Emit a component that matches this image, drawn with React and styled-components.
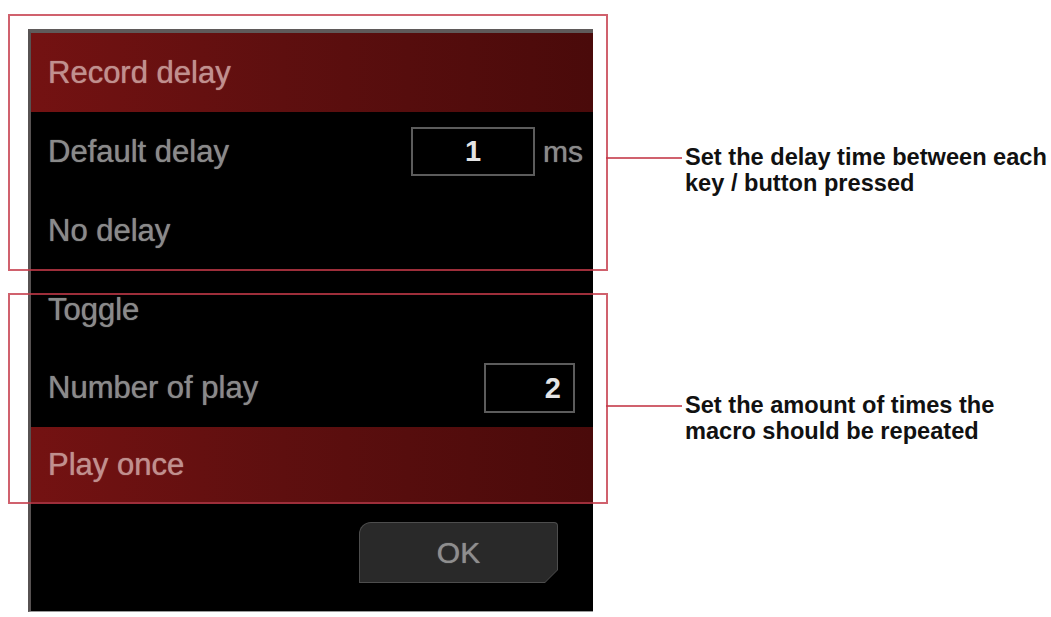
import React from 'react';
import styled, { createGlobalStyle } from 'styled-components';

const GlobalStyle = createGlobalStyle`
  html, body {
    margin: 0;
    padding: 0;
    background: #ffffff;
  }
  body {
    font-family: "Liberation Sans", Arial, sans-serif;
  }
`;

const Page = styled.div`
  padding: 29px 0 0 28px;
  width: 1051px;
  height: 617px;
  box-sizing: border-box;
  overflow: hidden;
`;

const Stage = styled.div`
  position: relative;
  width: 565px;
`;

const Panel = styled.div`
  box-sizing: border-box;
  width: 565px;
  height: 583px;
  background: #000;
  border-top: 4px solid #5f5a5a;
  border-left: 3px solid #575252;
  border-bottom: 1px solid #9a9a9a;
  display: flex;
  flex-direction: column;
`;

const Row = styled.div`
  height: ${p => p.h}px;
  flex: none;
  display: flex;
  align-items: center;
  padding: 0 ${p => p.pr || 10}px 0 17px;
  background: ${p => p.active
    ? 'linear-gradient(90deg, #741212 0%, #5e0f0f 45%, #4a0a0a 100%)'
    : 'transparent'};
`;

const Label = styled.span`
  flex: 1;
  font-size: 31px;
  color: ${p => p.active ? '#c0908e' : '#8a8a8a'};
  text-shadow: 0 0 1px currentColor;
  white-space: nowrap;
`;

const Field = styled.div`
  box-sizing: border-box;
  width: ${p => p.w}px;
  height: ${p => p.hgt}px;
  border: 2px solid #5c5c5c;
  display: flex;
  align-items: center;
  justify-content: ${p => p.align === 'right' ? 'flex-end' : 'center'};
  padding: 0 ${p => p.align === 'right' ? 12 : 0}px 0 0;
  color: #e4e4e4;
  font-size: 29px;
  font-weight: bold;
`;

const Unit = styled.span`
  margin-left: 8px;
  font-size: 30px;
  color: #8a8a8a;
  text-shadow: 0 0 1px currentColor;
`;

const Footer = styled.div`
  display: flex;
  justify-content: flex-end;
  padding: 20px 35px 0 0;
`;

const OkButton = styled.button`
  width: 199px;
  height: 61px;
  padding: 1px;
  border: none;
  background: #4d4d4d;
  border-radius: 12px 4px 0 0;
  clip-path: polygon(0 0, 100% 0, 100% calc(100% - 13px), calc(100% - 13px) 100%, 0 100%);
  cursor: pointer;
`;

const OkFace = styled.span`
  display: flex;
  align-items: center;
  justify-content: center;
  width: 100%;
  height: 100%;
  background: #292929;
  border-radius: 11px 3px 0 0;
  clip-path: polygon(0 0, 100% 0, 100% calc(100% - 12px), calc(100% - 12px) 100%, 0 100%);
  color: #8e8e8e;
  font-family: "Liberation Sans", Arial, sans-serif;
  font-size: 30px;
  text-shadow: 0 0 1px currentColor;
`;

const Frame = styled.div`
  position: absolute;
  left: -20px;
  top: ${p => p.top}px;
  width: 600px;
  height: ${p => p.h}px;
  box-sizing: border-box;
  border: 2px solid rgba(196, 58, 72, 0.8);
  pointer-events: none;
`;

const Callout = styled.div`
  position: absolute;
  left: 100%;
  top: ${p => p.top}px;
  display: flex;
  align-items: flex-start;
`;

const Connector = styled.div`
  width: 76px;
  height: 2px;
  margin-top: 13px;
  background: rgba(196, 58, 72, 0.8);
`;

const Note = styled.p`
  margin: 0 0 0 3px;
  font-size: 23.6px;
  line-height: 26px;
  font-weight: bold;
  color: #111;
  white-space: nowrap;
`;

export default function App() {
  return (
    <Page>
      <GlobalStyle />
      <Stage>
        <Panel>
          <Row h={79} active>
            <Label active>Record delay</Label>
          </Row>
          <Row h={79}>
            <Label>Default delay</Label>
            <Field w={124} hgt={49}>1</Field>
            <Unit>ms</Unit>
          </Row>
          <Row h={79}>
            <Label>No delay</Label>
          </Row>
          <Row h={79}>
            <Label>Toggle</Label>
          </Row>
          <Row h={78} pr={18}>
            <Label>Number of play</Label>
            <Field w={91} hgt={50} align="right">2</Field>
          </Row>
          <Row h={75} active>
            <Label active>Play once</Label>
          </Row>
          <Footer>
            <OkButton>
              <OkFace>OK</OkFace>
            </OkButton>
          </Footer>
        </Panel>

        <Frame top={-15} h={257}>
          <Callout top={128}>
            <Connector />
            <Note>
              Set the delay time between each<br />
              key / button pressed
            </Note>
          </Callout>
        </Frame>
        <Frame top={264} h={211}>
          <Callout top={97}>
            <Connector />
            <Note>
              Set the amount of times the<br />
              macro should be repeated
            </Note>
          </Callout>
        </Frame>
      </Stage>
    </Page>
  );
}
